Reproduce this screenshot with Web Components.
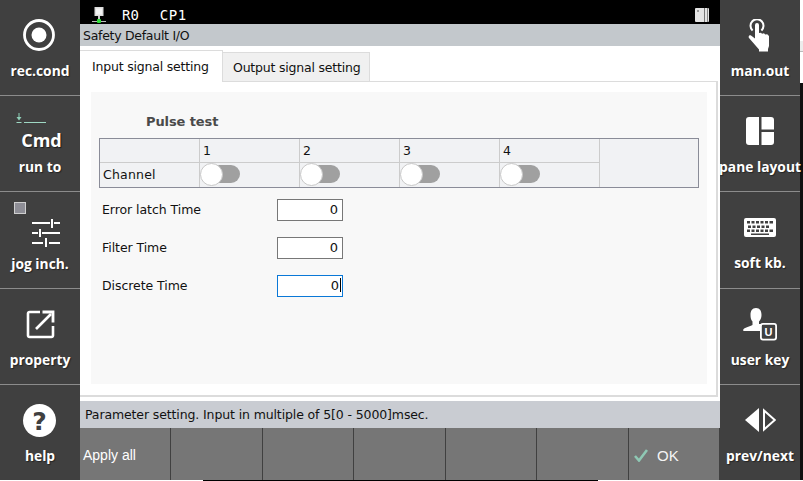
<!DOCTYPE html>
<html>
<head>
<meta charset="utf-8">
<title>Safety Default I/O</title>
<style>
    html, body { margin: 0; height: 100%; background: #000; overflow: hidden; }
    body { font-family: 'Liberation Sans', Arial, sans-serif; }
    app-shell { width: 803px; height: 481px; }
</style>
</head>
<body>
<app-shell>
    <side-bar slot="left">
        <side-button label="rec.cond"><svg style="margin-left:-2px" viewBox="0 0 34 34" width="34" height="34"><circle cx="17" cy="17" r="14.500" fill="none" stroke="#fff" stroke-width="2.800"/><circle cx="17" cy="17" r="7.500" fill="#fff"/></svg></side-button>
        <side-button label="run to" variant="cmd"><span class="cmd">Cmd</span></side-button>
        <side-button label="jog inch." variant="jog" tall><svg style="margin-left:12px" viewBox="0 0 28 28" width="28" height="28" fill="#fff"><path d="M0 3h18v2H0zM22 3h6v2h-6zM19 0h2v9h-2zM0 13h6v2H0zM10 13h18v2H10zM7 10h2v8H7zM0 23h11v2H0zM17 23h11v2H17zM13 19h2v9h-2z"/></svg></side-button>
        <side-button label="property"><svg style="margin-left:2px" viewBox="0 0 30 30" width="30" height="30" fill="none" stroke="#fff" stroke-width="2.600"><path d="M14 3H3.500a1.500 1.500 0 0 0-1.500 1.500v22A1.500 1.500 0 0 0 3.500 28h22a1.500 1.500 0 0 0 1.500-1.500V17"/><path d="M10 20L25 5"/><path d="M16.500 3H27v10.500" stroke-width="2.800"/></svg></side-button>
        <side-button label="help" last><svg style="margin-left:-2px" viewBox="0 0 33 33" width="33" height="33"><circle cx="16.500" cy="16.500" r="16.500" fill="#fff"/><text x="16.500" y="25.500" text-anchor="middle" font-family="DejaVu Sans" font-weight="700" font-size="25" fill="#404040">?</text></svg></side-button>
    </side-bar>

    <div slot="center" style="display:contents">
        <top-status></top-status>
        <title-bar>Safety Default I/O</title-bar>
        <tab-panel>
            <pulse-table></pulse-table>
            <time-field label="Error latch Time" value="0"></time-field>
            <time-field label="Filter Time" value="0"></time-field>
            <time-field label="Discrete Time" value="0" focused></time-field>
        </tab-panel>
        <status-line>Parameter setting. Input in multiple of 5[0 - 5000]msec.</status-line>
        <soft-keys></soft-keys>
    </div>

    <side-bar slot="right">
        <side-button label="man.out"><svg style="margin-left:-2px" viewBox="0 0 22 33" width="22" height="33"><path d="M4.600 11.500A6.500 6.500 0 1 1 13.400 11.500" fill="none" stroke="#fff" stroke-width="2"/><path fill="#fff" d="M7 6a2 2 0 0 1 4 0v8l2-.3 1 1 2-.4 1.200 1.200 2-.2 1.800 1.700V27l-1 3v2.500H11V30.500L1 19c-1-1.500.3-3.200 2-2.500l4 3z"/></svg></side-button>
        <side-button label="pane layout"><svg viewBox="0 0 28 28" width="28" height="28" fill="#fff"><path d="M3 0h10v28H3a3 3 0 0 1-3-3V3a3 3 0 0 1 3-3z"/><path d="M15.500 0H25a3 3 0 0 1 3 3v9.500H15.500zM15.500 15H28v10a3 3 0 0 1-3 3h-9.500z"/></svg></side-button>
        <side-button label="soft kb." tall><svg viewBox="0 0 32 19" width="32" height="19"><rect width="32" height="19" rx="2" fill="#fff"/><path d="M3 3h3v2.500H3zM7.500 3h3v2.500h-3zM12 3h3v2.500h-3zM16.500 3h3v2.500h-3zM21 3h3v2.500h-3zM25.500 3h3.500v2.500h-3.500zM4 7.500h3V10H4zM8.500 7.500h3V10h-3zM13 7.500h3V10h-3zM17.500 7.500h3V10h-3zM22 7.500h3V10h-3zM3 11.500h3V14H3zM7.500 11.500h3V14h-3zM12 11.500h3V14h-3zM16.500 11.500h3V14h-3zM21 11.500h3V14h-3zM25.500 11.500h3.500V14h-3.500zM7 15.500h18v1.500H7z" fill="#404040"/></svg></side-button>
        <side-button label="user key"><svg viewBox="0 0 34 33" width="34" height="33"><path d="M13 0c4 0 5.500 3 5.500 7 0 3-1 5-2.500 6.500V16h6v7H1c-1 0-1.200-1-.5-1.800C2 19.500 7 18.500 9.500 17v-3.500C8 12 7.500 10 7.500 7 7.500 3 9 0 13 0z" fill="#fff"/><rect x="17.900" y="15.900" width="15.200" height="15.700" rx="2" fill="#404040" stroke="#fff" stroke-width="1.800"/><text x="25.500" y="28" text-anchor="middle" font-family="Liberation Sans" font-weight="700" font-size="11" fill="#fff">U</text></svg></side-button>
        <side-button label="prev/next" last><svg viewBox="0 0 31 24" width="31" height="24"><path d="M14 0v24L0 12z" fill="#fff"/><path d="M19 2.500v19L29.800 12z" fill="none" stroke="#fff" stroke-width="2"/></svg></side-button>
    </side-bar>
</app-shell>

<script>
class AppShell extends HTMLElement {
    connectedCallback() {
        this.attachShadow({ mode: 'open' });
        this.shadowRoot.innerHTML = `
            <style>
                :host { display: flex; background: #000; font-family: 'Liberation Sans', Arial, sans-serif; position: relative; }
                .center { width: 640px; height: 480px; display: flex; flex-direction: column; background: #fff; }
                .rest { width: 3px; display: flex; flex-direction: column; }
                .strip { position: absolute; left: 0; bottom: 0; width: 803px; height: 1px; background: #fff; }
                .strip i { position: absolute; left: 203px; width: 395px; height: 1px; background: #000; }
            </style>
            <slot name="left"></slot>
            <div class="center"><slot name="center"></slot></div>
            <slot name="right"></slot>
            <div class="rest">
                <div style="height:41px;background:#fff"></div>
                <div style="height:10px;background:#ececec"></div>
                <div style="height:1px;background:#bbb"></div>
                <div style="height:31px;background:#fff"></div>
                <div style="flex:1;background:#101010"></div>
            </div>
            <div class="strip"><i></i></div>
        `;
    }
}

class SideBar extends HTMLElement {
    connectedCallback() {
        this.attachShadow({ mode: 'open' });
        this.shadowRoot.innerHTML = `
            <style>
                :host { display: flex; flex-direction: column; width: 80px; height: 480px; background: #404040; }
            </style>
            <slot></slot>
        `;
    }
}

class SideButton extends HTMLElement {
    connectedCallback() {
        const variant = this.getAttribute('variant') || '';
        this.attachShadow({ mode: 'open' });
        this.shadowRoot.innerHTML = `
            <style>
                :host { display: flex; flex-direction: column; align-items: center; height: 96px; box-sizing: border-box;
                    position: relative; border-bottom: 1px solid #8c8c8c; color: #fff; flex: none; }
                :host([tall]) { height: 97px; }
                :host([last]) { border-bottom: 0; height: 95px; }
                .icon { height: 70px; display: flex; align-items: center; justify-content: center; box-sizing: border-box; }
                .label { font: 700 13.800px 'Open Sans', sans-serif; line-height: 18px; white-space: nowrap; margin-top: -8px; text-align: center;
                    text-shadow: 1px 1px 1px rgba(0,0,0,.45); }
                ::slotted(.cmd) { font: 700 18px 'Open Sans', sans-serif; margin-left: 3px; text-shadow: 1px 1px 1px rgba(0,0,0,.6); }
                :host([variant=cmd]) .icon { padding-top: 18px; }
                :host([variant=jog]) .icon { padding-top: 12px; }
                :host([variant=jog]) .label { margin-top: -7px; }
                .run { position: absolute; left: 16px; top: 17px; }
                .box { position: absolute; left: 14px; top: 10px; width: 12px; height: 12px; background: #8e8e96; border: 1px solid #cfcfcf; box-sizing: border-box; }
            </style>
            ${variant === 'cmd' ? '<svg class="run" width="30" height="10" viewBox="0 0 30 10"><path d="M3 0v5" stroke="#8fd0b8"/><path d="M.5 4h5L3 7.500z" fill="#8fd0b8"/><path d="M.5 9.500h5M8 9.500h22" stroke="#9fd8c4"/></svg>' : ''}
            ${variant === 'jog' ? '<div class="box"></div>' : ''}
            <div class="icon"><slot></slot></div>
            <div class="label">${this.getAttribute('label')}</div>
        `;
    }
}

class TopStatus extends HTMLElement {
    connectedCallback() {
        this.attachShadow({ mode: 'open' });
        this.shadowRoot.innerHTML = `
            <style>
                :host { display: flex; align-items: center; height: 24px; box-sizing: border-box; background: #000; color: #fff; padding: 6px 11px 0 12px;
                    font: 14px 'DejaVu Sans Mono', monospace; flex: none; }
                .r { margin-left: 16px; }
                .c { margin-left: 21px; letter-spacing: .5px; }
                .book { margin-left: auto; }
            </style>
            <svg width="14" height="16" viewBox="0 0 14 16"><rect x="2.500" y="0" width="9" height="9" fill="#dcdcdc"/><rect x="4" y="1.500" width="6" height="6" fill="#f4f4f4"/><rect x="6" y="9" width="2" height="3" fill="#ccc"/><rect x="0" y="14" width="14" height="1" fill="#bbb"/><rect x="5" y="12" width="4" height="4" rx="1" fill="#2fe03a"/></svg>
            <span class="r">R0</span><span class="c">CP1</span>
            <svg class="book" width="14" height="14" viewBox="0 0 14 14"><rect width="14" height="14" rx="1" fill="#e4e4e4"/><rect x="9" y="0" width="1" height="14" fill="#777"/><rect x="12" y="0" width="1" height="14" fill="#888"/><rect x="2" y="2" width="2" height="2" fill="#999"/></svg>
        `;
    }
}

class TitleBar extends HTMLElement {
    connectedCallback() {
        this.attachShadow({ mode: 'open' });
        this.shadowRoot.innerHTML = `
            <style>
                :host { display: flex; align-items: center; height: 22px; background: #c3c8cc; color: #111; padding-left: 3px; flex: none;
                    font: 12.500px 'DejaVu Sans', sans-serif; letter-spacing: -.28px; }
            </style>
            <slot></slot>
        `;
    }
}

class TabPanel extends HTMLElement {
    connectedCallback() {
        this.attachShadow({ mode: 'open' });
        this.shadowRoot.innerHTML = `
            <style>
                :host { display: flex; flex-direction: column; height: 355px; flex: none; background: #fff; color: #111;
                    font: 12.500px 'DejaVu Sans', sans-serif; letter-spacing: -.06px; }
                .tabs { display: flex; align-items: flex-end; height: 35px; box-sizing: border-box; padding-top: 4px; flex: none; }
                .tab { box-sizing: border-box; display: flex; align-items: center; white-space: nowrap; margin-bottom: -1px; letter-spacing: -.2px; }
                .on { width: 143px; height: 32px; padding: 0 0 1px 12px; border: 1px solid #dcdcdc; border-left: 0; border-bottom: 0; background: #fff; position: relative; z-index: 1; }
                .off { width: 147px; height: 30px; padding-left: 10px; border: 1px solid #dcdcdc; border-left: 0; background: #f0f0f0; position: relative; }
                .page { height: 316px; width: 638px; box-sizing: border-box; border: 1px solid #dcdcdc; border-width: 1px 2px 2px 0; padding: 10px 9px 10px 11px; flex: none; }
                .inner { height: 292px; background: #f8f8f8; box-sizing: border-box; padding: 22px 8px 0; }
                .head { font: 700 13px 'DejaVu Sans', sans-serif; letter-spacing: -.1px; color: #4a4a4a; padding-left: 47px; height: 24px; line-height: 16px; }
            </style>
            <div class="tabs">
                <div class="tab on">Input signal setting</div>
                <div class="tab off">Output signal setting</div>
            </div>
            <div class="page"><div class="inner">
                <div class="head">Pulse test</div>
                <slot></slot>
            </div></div>
        `;
    }
}

class PulseTable extends HTMLElement {
    connectedCallback() {
        this.attachShadow({ mode: 'open' });
        const heads = [1, 2, 3, 4].map(n => `<div class="c">${n}</div>`).join('');
        const sw = [1, 2, 3, 4].map(() => `<div class="c sw"><toggle-switch></toggle-switch></div>`).join('');
        this.shadowRoot.innerHTML = `
            <style>
                :host { display: block; width: 600px; height: 50px; box-sizing: border-box; border: 1px solid #8a8c98; background: #f1f2f4;
                    margin-bottom: 11px; }
                .g { display: grid; grid-template-columns: 100px repeat(4, 100px); grid-template-rows: 24px 24px; height: 48px; }
                .c { border-right: 1px solid #ccc; border-bottom: 1px solid #ccc; box-sizing: border-box; padding: 0 0 0 3px; display: flex; align-items: center; font-size: 12.500px; }
                .sw { padding: 0; border-bottom: 0; align-items: flex-start; }
                .l { border-bottom: 0; letter-spacing: .2px; padding-bottom: 2px; }
            </style>
            <div class="g">
                <div class="c"></div>${heads}
                <div class="c l">Channel</div>${sw}
            </div>
        `;
    }
}

class ToggleSwitch extends HTMLElement {
    connectedCallback() {
        this.attachShadow({ mode: 'open' });
        this.shadowRoot.innerHTML = `
            <style>
                :host { display: block; width: 40px; height: 23px; position: relative; }
                .track { position: absolute; left: 8px; right: 0; top: 2px; height: 18px; border-radius: 9px; background: #a0a0a0; }
                .knob { position: absolute; left: 0; top: 0; width: 23px; height: 23px; box-sizing: border-box; border-radius: 50%; background: #fff; border: 1px solid #c8c8c8; }
            </style>
            <div class="track"></div><div class="knob"></div>
        `;
    }
}

class TimeField extends HTMLElement {
    connectedCallback() {
        const focused = this.hasAttribute('focused');
        this.attachShadow({ mode: 'open' });
        this.shadowRoot.innerHTML = `
            <style>
                :host { display: flex; align-items: center; height: 22px; margin-bottom: 16px; padding-left: 3px; font-size: 12.500px; }
                .l { width: 175px; padding-bottom: 2px; }
                .box { width: 66px; height: 22px; box-sizing: border-box; background: #fff; border: 1px solid #777; text-align: right;
                    padding-right: ${focused ? 1 : 3}px; line-height: 20px; font-size: 13px; letter-spacing: 0; }
                .box span.d { margin-right: 1px; }
                :host([focused]) .box { border: 1px solid #0a78d7; }
                .caret { display: inline-block; width: 1px; height: 14px; background: #000; vertical-align: -2px; }
            </style>
            <div class="l">${this.getAttribute('label')}</div>
            <div class="box"><span class="d">${this.getAttribute('value')}</span>${focused ? '<span class="caret"></span>' : ''}</div>
        `;
    }
}

class StatusLine extends HTMLElement {
    connectedCallback() {
        this.attachShadow({ mode: 'open' });
        this.shadowRoot.innerHTML = `
            <style>
                :host { display: flex; align-items: center; height: 27px; background: #c9ccd2; color: #111; padding-left: 5px; flex: none;
                    font: 12.500px 'DejaVu Sans', sans-serif; letter-spacing: -.12px; white-space: nowrap; }
            </style>
            <slot></slot>
        `;
    }
}

class SoftKeys extends HTMLElement {
    connectedCallback() {
        this.attachShadow({ mode: 'open' });
        this.shadowRoot.innerHTML = `
            <style>
                :host { display: grid; grid-template-columns: 91px 92px 91px 92px 91px 92px 1fr; height: 52px; box-sizing: border-box; background: #767676; color: #fff; flex: none;
                    border-right: 1px solid #404040; font: 14px 'Liberation Sans', Arial, sans-serif; }
                div { border-right: 1px solid #404040; display: flex; align-items: center; padding: 2px 0 0 3px; }
                div:last-child { border-right: 0; padding-left: 5px; gap: 9px; font-size: 15px; color: #f4f4f4; }
            </style>
            <div>Apply all</div><div></div><div></div><div></div><div></div><div></div>
            <div><svg width="14" height="13" viewBox="0 0 14 13"><path d="M1 7l4 4.500L13 1" fill="none" stroke="#8fc8b4" stroke-width="2.600"/></svg>OK</div>
        `;
    }
}

customElements.define('app-shell', AppShell);
customElements.define('side-bar', SideBar);
customElements.define('side-button', SideButton);
customElements.define('top-status', TopStatus);
customElements.define('title-bar', TitleBar);
customElements.define('tab-panel', TabPanel);
customElements.define('pulse-table', PulseTable);
customElements.define('toggle-switch', ToggleSwitch);
customElements.define('time-field', TimeField);
customElements.define('status-line', StatusLine);
customElements.define('soft-keys', SoftKeys);
</script>
</body>
</html>
